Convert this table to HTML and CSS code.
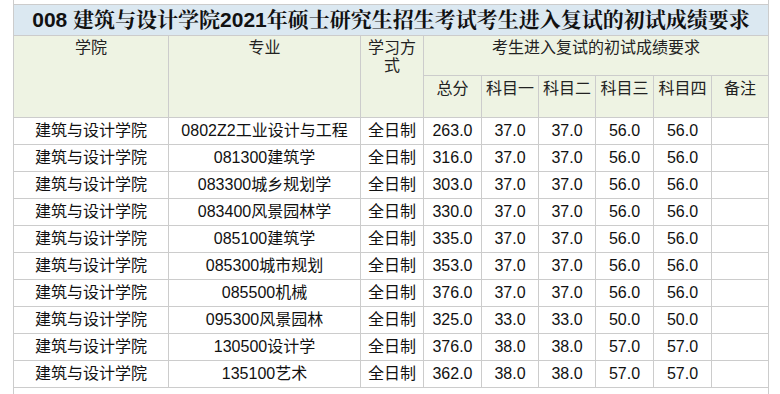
FILE: index.html
```html
<!DOCTYPE html>
<html lang="zh-CN">
<head>
<meta charset="utf-8">
<title>复试成绩要求</title>
<link rel="stylesheet" href="styles.css">
</head>
<body>
<table class="score-table">
  <colgroup>
    <col class="c-college">
    <col class="c-major">
    <col class="c-mode">
    <col class="c-total">
    <col class="c-s1">
    <col class="c-s2">
    <col class="c-s3">
    <col class="c-s4">
    <col class="c-note">
  </colgroup>
  <tbody>
    <tr class="row-cut"><td colspan="9"></td></tr>
    <tr class="row-title"><td colspan="9">008 建筑与设计学院2021年硕士研究生招生考试考生进入复试的初试成绩要求</td></tr>
    <tr class="row-head1">
      <td rowspan="2">学院</td>
      <td rowspan="2">专业</td>
      <td rowspan="2">学习方式</td>
      <td colspan="6">考生进入复试的初试成绩要求</td>
    </tr>
    <tr class="row-head2">
      <td>总分</td><td>科目一</td><td>科目二</td><td>科目三</td><td>科目四</td><td>备注</td>
    </tr>
    <tr class="row-data"><td>建筑与设计学院</td><td>0802Z2工业设计与工程</td><td>全日制</td><td>263.0</td><td>37.0</td><td>37.0</td><td>56.0</td><td>56.0</td><td></td></tr>
    <tr class="row-data"><td>建筑与设计学院</td><td>081300建筑学</td><td>全日制</td><td>316.0</td><td>37.0</td><td>37.0</td><td>56.0</td><td>56.0</td><td></td></tr>
    <tr class="row-data"><td>建筑与设计学院</td><td>083300城乡规划学</td><td>全日制</td><td>303.0</td><td>37.0</td><td>37.0</td><td>56.0</td><td>56.0</td><td></td></tr>
    <tr class="row-data"><td>建筑与设计学院</td><td>083400风景园林学</td><td>全日制</td><td>330.0</td><td>37.0</td><td>37.0</td><td>56.0</td><td>56.0</td><td></td></tr>
    <tr class="row-data"><td>建筑与设计学院</td><td>085100建筑学</td><td>全日制</td><td>335.0</td><td>37.0</td><td>37.0</td><td>56.0</td><td>56.0</td><td></td></tr>
    <tr class="row-data"><td>建筑与设计学院</td><td>085300城市规划</td><td>全日制</td><td>353.0</td><td>37.0</td><td>37.0</td><td>56.0</td><td>56.0</td><td></td></tr>
    <tr class="row-data"><td>建筑与设计学院</td><td>085500机械</td><td>全日制</td><td>376.0</td><td>37.0</td><td>37.0</td><td>56.0</td><td>56.0</td><td></td></tr>
    <tr class="row-data"><td>建筑与设计学院</td><td>095300风景园林</td><td>全日制</td><td>325.0</td><td>33.0</td><td>33.0</td><td>50.0</td><td>50.0</td><td></td></tr>
    <tr class="row-data"><td>建筑与设计学院</td><td>130500设计学</td><td>全日制</td><td>376.0</td><td>38.0</td><td>38.0</td><td>57.0</td><td>57.0</td><td></td></tr>
    <tr class="row-data"><td>建筑与设计学院</td><td>135100艺术</td><td>全日制</td><td>362.0</td><td>38.0</td><td>38.0</td><td>57.0</td><td>57.0</td><td></td></tr>
    <tr class="row-foot"><td colspan="9"></td></tr>
  </tbody>
</table>
</body>
</html>
```
FILE: styles.css
```css
html, body {
  margin: 0;
  padding: 0;
  background: #ffffff;
}

body {
  padding-left: 13px;
  font-family: "Liberation Sans", "Noto Sans CJK SC", sans-serif;
  color: #111;
}

.score-table {
  border-collapse: collapse;
  table-layout: fixed;
  width: 756px;
}

.score-table td {
  border: 1px solid #cccccc;
  padding: 0;
  text-align: center;
  font-size: 16px;
  overflow: hidden;
}

.c-college { width: 155px; }
.c-major { width: 192px; }
.c-mode { width: 63px; }
.c-total { width: 58px; }
.c-s1 { width: 57px; }
.c-s2 { width: 57px; }
.c-s3 { width: 58px; }
.c-s4 { width: 58px; }
.c-note { width: 57px; }

.row-cut td {
  border-top: 0;
  height: 4px;
}

.row-title td {
  height: 30px;
  background: #dbe8f1;
  font-size: 21px;
  font-weight: bold;
  line-height: 30px;
  color: #111;
  font-family: "Liberation Sans", "Noto Serif CJK SC", "Noto Sans CJK SC", serif;
}

.row-head1 td,
.row-head2 td {
  background: #eef3e3;
  vertical-align: top;
  color: #222;
  line-height: 18px;
}

.row-head1 td {
  height: 40px;
  padding-top: 3px;
  box-sizing: border-box;
}

.row-head1 td[rowspan] {
  padding-left: 2px;
  padding-right: 2px;
}

.row-head2 td {
  height: 42px;
  padding-top: 4px;
  box-sizing: border-box;
}

.row-data td {
  height: 26px;
  line-height: 26px;
  white-space: nowrap;
}

.row-foot td {
  height: 40px;
  border-bottom: 0;
}
```
